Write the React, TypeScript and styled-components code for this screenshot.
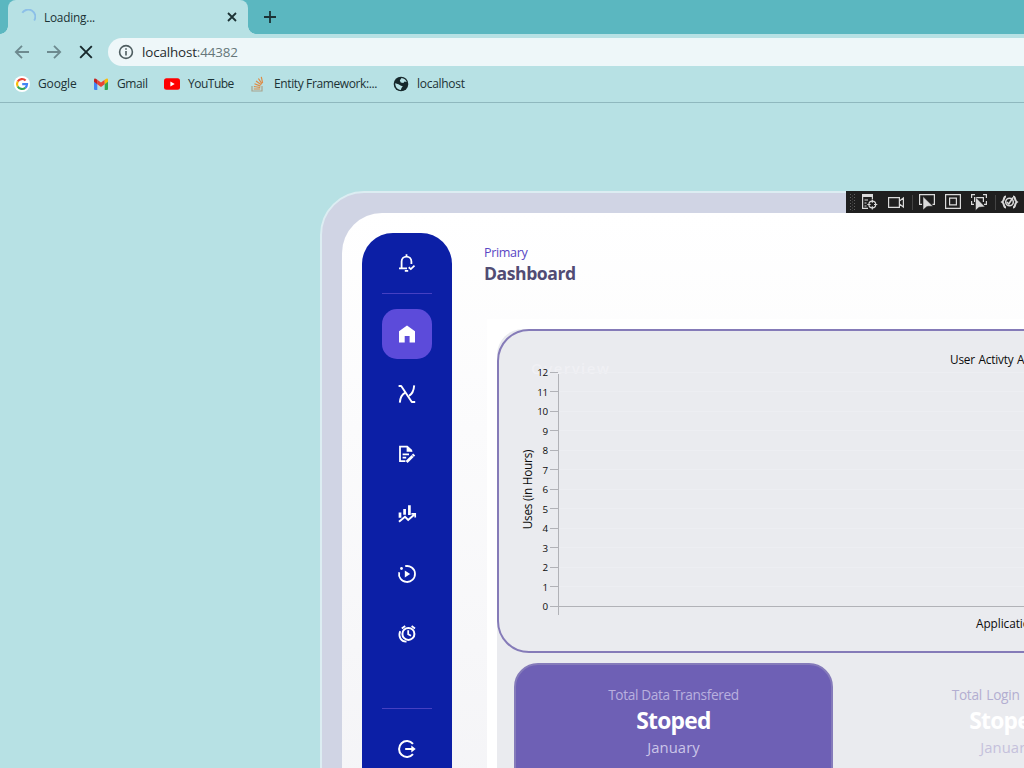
import React from "react";
import styled, { createGlobalStyle } from "styled-components";

const GlobalStyle = createGlobalStyle`
  * { box-sizing: border-box; }
  html, body { margin: 0; padding: 0; overflow: hidden; }
  body { font-family: "Open Sans", "Noto Sans", sans-serif; }
  svg { display: block; flex: none; }
`;

const Screen = styled.div`
  position: relative;
  width: 1024px;
  height: 768px;
  overflow: hidden;
  background: #b7e1e4;
`;

/* Browser chrome */
const TabStrip = styled.div`
  display: flex;
  height: 34px;
  padding-left: 8px;
  background: #5bb7c0;
`;
const StripEdge = styled.div`
  width: 8px;
  height: 34px;
  margin-left: -8px;
  background: radial-gradient(circle at 0 0, transparent 7.5px, #b7e1e4 8px) 0 26px / 8px 8px no-repeat;
`;
const StripEdgeRight = styled.div`
  width: 8px;
  height: 34px;
  background: radial-gradient(circle at 100% 0, transparent 7.5px, #b7e1e4 8px) 0 26px / 8px 8px no-repeat;
`;
const Tab = styled.div`
  display: flex;
  align-items: center;
  width: 240px;
  height: 34px;
  padding: 0 10px 0 12px;
  border-radius: 8px 8px 0 0;
  background: #b7e1e4;
`;
const TabTitle = styled.span`
  flex: 1;
  margin: -1px 0 0 8px;
  font-size: 11.8px;
  letter-spacing: -0.2px;
  color: #1c3235;
`;
const NewTab = styled.div`
  display: flex;
  align-items: center;
  padding-left: 7px;
`;
const NavBar = styled.div`
  display: flex;
  align-items: center;
  height: 36px;
  padding-left: 14px;
`;
const NavButton = styled.div`
  width: 16px;
  margin-right: 16px;
`;
const AddressField = styled.div`
  display: flex;
  align-items: center;
  flex: 1;
  height: 28px;
  margin-left: -2px;
  padding-left: 10px;
  border-radius: 14px 0 0 14px;
  background: #eef7f9;
`;
const Address = styled.span`
  margin-left: 8px;
  font-size: 13.4px;
  letter-spacing: -0.14px;
  color: #1f2b2e;
`;
const Port = styled.span`
  color: #66777a;
`;
const Bookmarks = styled.div`
  display: flex;
  align-items: center;
  height: 33px;
  padding: 0 0 4px 14px;
  border-bottom: 1px solid #8fb8be;
`;
const Bookmark = styled.div<{ $w: number; $track?: number }>`
  display: flex;
  align-items: center;
  gap: 8px;
  width: ${(p) => p.$w}px;
  height: 28px;
  font-size: 12px;
  letter-spacing: ${(p) => p.$track ?? -0.28}px;
  white-space: nowrap;
  color: #1c3235;
`;
const BookmarkName = styled.span`
  margin-top: -1px;
`;

/* Web page */
const Page = styled.div`
  height: 665px;
  padding: 88px 0 0 320px;
`;
const Frame = styled.div`
  display: flex;
  width: 1240px;
  height: 760px;
  border: 2px solid #dcedf2;
  border-radius: 44px;
  padding: 20px;
  background: #d0d4e4;
`;
const Shell = styled.div`
  display: flex;
  align-items: flex-start;
  width: 100%;
  height: 720px;
  padding: 20px;
  border-radius: 40px;
  background: linear-gradient(#ffffff, #f3f3f6 650px);
`;
const SideBar = styled.nav`
  display: flex;
  flex-direction: column;
  align-items: center;
  width: 90px;
  height: 680px;
  border-radius: 31px;
  background: #0c1fa6;
`;
const SideItem = styled.div<{ $active?: boolean }>`
  display: flex;
  align-items: center;
  justify-content: center;
  width: 50px;
  height: 50px;
  margin-bottom: 10px;
  border-radius: 15px;
  background: ${(p) => (p.$active ? "#5c4bda" : "transparent")};
`;
const SideCap = styled.div`
  display: flex;
  align-items: center;
  justify-content: center;
  height: 60px;
`;
const SideRule = styled.div<{ $after: number }>`
  width: 50px;
  height: 1px;
  margin-bottom: ${(p) => p.$after}px;
  background: #4640c2;
`;
const SideMenu = styled.div`
  height: 399px;
`;
const Main = styled.main`
  margin-left: 32px;
  width: 1000px;
`;
const Crumb = styled.div`
  height: 18px;
  margin-top: 10px;
  font-size: 12.6px;
  letter-spacing: -0.36px;
  line-height: 20px;
  color: #5946c4;
`;
const Heading = styled.h1`
  height: 24px;
  margin: 0;
  font-size: 17.6px;
  font-weight: 700;
  letter-spacing: -0.45px;
  line-height: 24px;
  color: #524c74;
`;
const Panel = styled.section`
  width: 990px;
  margin: 34px 0 0 3px;
  padding: 10px;
  background: #ffffff;
`;
const Overview = styled.div`
  width: 990px;
  height: 560px;
  border-radius: 26px;
  background: #eaebef;
`;
const ChartCard = styled.div`
  height: 324px;
  border: 2px solid #857bb8;
  border-radius: 32px;
  background: #eaebef;
`;
const Cards = styled.div`
  display: flex;
  gap: 14px;
  padding: 10px 0 0 17px;
`;
const Card = styled.div<{ $solid?: boolean }>`
  display: flex;
  flex-direction: column;
  align-items: center;
  width: 319px;
  height: 130px;
  padding-top: 19px;
  border: 2px solid ${(p) => (p.$solid ? "#857bba" : "transparent")};
  border-radius: 24px;
  background: ${(p) => (p.$solid ? "#6e60b5" : "transparent")};
`;
const CardLabel = styled.div<{ $dim?: boolean }>`
  height: 22px;
  font-size: 13.7px;
  letter-spacing: ${(p) => (p.$dim ? -0.27 : -0.37)}px;
  word-spacing: ${(p) => (p.$dim ? 1 : 0)}px;
  line-height: 22px;
  white-space: nowrap;
  color: ${(p) => (p.$dim ? "#b3aed1" : "#b9b0df")};
`;
const CardValue = styled.div`
  height: 30px;
  font-size: 22.8px;
  font-weight: 700;
  letter-spacing: -0.75px;
  line-height: 30px;
  color: #ffffff;
`;
const CardMonth = styled.div<{ $dim?: boolean }>`
  height: 24px;
  margin-top: -1px;
  font-size: 14.8px;
  letter-spacing: 0.1px;
  line-height: 24px;
  color: ${(p) => (p.$dim ? "#c5c1dc" : "#cbc5e8")};
`;
const DebugBar = styled.div`
  position: absolute;
  top: 191px;
  left: 846px;
  width: 178px;
  height: 22px;
  background: #1f1f1f;
`;

const Glyph = ({ children, size = 20 }: { children: React.ReactNode; size?: number }) => (
  <svg width={size} height={size} viewBox="0 0 20 20" fill="none" stroke="#fff" strokeWidth="1.8">
    {children}
  </svg>
);

const BellIcon = () => (
  <Glyph>
    <path d="M2 15.3H10M4.6 15V8.5C4.6 5.5 6.8 3.6 9.5 3.6S14.4 5.5 14.4 8.5V11M9.5 1.2V3.5" />
    <path d="M11.7 14.3L13.8 16.1L17.5 12.7M7.8 17.8H11.2" />
  </Glyph>
);
const HomeIcon = () => (
  <Glyph>
    <path d="M2 7.2L10 1.6L18 7.2V18.5H12.6V12H7.7V18.5H2Z" fill="#fff" stroke="none" />
  </Glyph>
);
const CurveIcon = () => (
  <Glyph>
    <path d="M1.6 2H4.2L14.8 18H18.2" strokeWidth="1.9" strokeLinejoin="round" />
    <path d="M2.8 18.6C3.2 13.4 4.6 10.4 8.2 8.6M17.2 1.4C16.8 6.8 15.6 10 12 11.8" strokeWidth="1.9" />
  </Glyph>
);
const EditIcon = () => (
  <Glyph>
    <path d="M8.4 17.1H3V2.6H10.2L14.8 7" />
    <path d="M9.6 1.8V7.8H15.8Z" fill="#fff" stroke="none" />
    <path d="M5.6 10.4H12M5.6 13.6H9.2" />
    <path d="M9.6 17.9L17.2 10.4" strokeWidth="2.8" />
    <path d="M14.2 10.5L16.9 13.2" stroke="#0c1fa6" strokeWidth="0.6" />
  </Glyph>
);
const BarsIcon = () => (
  <Glyph>
    <path d="M3 8.6V13.8M7.6 5V10.8M12.4 1.2V11" strokeWidth="2.7" />
    <path d="M2 17.8L8 12.8L11.2 16L17.4 10.6" strokeWidth="2" />
    <path d="M14.4 9.8H18.2V13.6" strokeWidth="1.7" />
  </Glyph>
);
const PlayIcon = () => (
  <Glyph>
    <path d="M8.2 2.2A8 8 0 1 1 2.2 8.2" />
    <path d="M7.8 6.5L13.2 10L7.8 13.5Z" fill="#fff" stroke="none" />
    <circle cx="4.5" cy="4.5" r="1.4" fill="#fff" stroke="none" />
  </Glyph>
);
const AlarmIcon = () => (
  <Glyph>
    <circle cx="11.4" cy="9.9" r="6" strokeWidth="2" />
    <path d="M11.2 6.3V10.2L14 11.8M4.8 4.6L8.2 2.1M14.6 2.1L18 4.6" />
    <path d="M3.2 7.1C.9 12.6 4 18 9.5 17.7" />
  </Glyph>
);
const ExitIcon = () => (
  <Glyph>
    <path d="M16 4.9A7.9 7.9 0 1 0 16 15.1M8.2 10H16" strokeWidth="2" />
    <path d="M14.3 6.6L18.7 10L14.3 13.4Z" fill="#fff" stroke="none" />
  </Glyph>
);

const Spinner = () => (
  <svg width="16" height="16" viewBox="0 0 16 16" fill="none">
    <path d="M2.3 3.8A7 7 0 0 1 14.2 11.5" stroke="#8cbfe8" strokeWidth="1.9" />
  </svg>
);

const GoogleIcon = () => (
  <svg width="16" height="16" viewBox="0 0 16 16" fill="none" strokeWidth="2.2">
    <circle cx="8" cy="8" r="8" fill="#fff" />
    <path d="M11.6 4.5A5 5 0 0 0 3.7 5.5" stroke="#ea4335" />
    <path d="M3.7 5.5A5 5 0 0 0 3.7 10.5" stroke="#fbbc05" />
    <path d="M3.7 10.5A5 5 0 0 0 11.3 11.8" stroke="#34a853" />
    <path d="M11.3 11.8A5 5 0 0 0 13 8.2H8.2" stroke="#4285f4" />
  </svg>
);
const GmailIcon = () => (
  <svg width="16" height="16" viewBox="0 0 16 16">
    <path d="M1 3.5L4.3 6V14H2Q1 14 1 13Z" fill="#4285f4" />
    <path d="M15 3.5L11.7 6V14H14Q15 14 15 13Z" fill="#34a853" />
    <path d="M4.3 3.8L8 6.6L11.7 3.8V8.2L8 11L4.3 8.2Z" fill="#ea4335" />
    <path d="M1 4Q1 1.2 4.3 3.8V8.2L1 5.7Z" fill="#c5221f" />
    <path d="M15 4Q15 1.2 11.7 3.8V8.2L15 5.7Z" fill="#fbbc04" />
  </svg>
);
const YouTubeIcon = () => (
  <svg width="16" height="16" viewBox="0 0 16 16">
    <rect x="0" y="2.3" width="16" height="11.5" rx="2.5" fill="#f00" />
    <path d="M6.4 5.5L10.7 8L6.4 10.5Z" fill="#fff" />
  </svg>
);
const StackIcon = () => (
  <svg width="16" height="16" viewBox="0 0 16 16" fill="none">
    <path d="M2 10V15H12V10" stroke="#a9a48e" strokeWidth="1.2" />
    <path d="M3.8 13H10.2M3.9 10.5L10.2 11.5M4.5 7.8L10.5 10.1M6 5L11.3 8.7M8.4 2.5L12 7.8M11.3.8L12.6 7" stroke="#df8a43" strokeWidth="1.2" />
  </svg>
);
const GlobeIcon = () => (
  <svg width="16" height="16" viewBox="0 0 16 16">
    <circle cx="8" cy="8" r="7.3" fill="#17282b" />
    <path d="M8.5 2.1C11 2.5 13 4 13.7 6L11.6 5.5L10.3 7L7.8 6.5L6.8 4.5Z" fill="#b7e1e4" />
    <path d="M2.2 7.2L5.5 8.2L8 9.8L9.8 10.2L8.5 12L7.8 13.9C4.5 13.7 2.2 11 2.2 7.2Z" fill="#b7e1e4" />
  </svg>
);

const Browser = () => (
  <header>
    <TabStrip>
      <StripEdge />
      <Tab>
        <Spinner />
        <TabTitle>Loading...</TabTitle>
        <svg width="12" height="12" viewBox="0 0 12 12" stroke="#1c3235" strokeWidth="1.8">
          <path d="M2 2L10 10M10 2L2 10" />
        </svg>
      </Tab>
      <StripEdgeRight />
      <NewTab>
        <svg width="14" height="14" viewBox="0 0 14 14" stroke="#1c3235" strokeWidth="1.8">
          <path d="M7 1V13M1 7H13" />
        </svg>
      </NewTab>
    </TabStrip>
    <NavBar>
      <NavButton>
        <svg width="16" height="16" viewBox="0 0 16 16" fill="none" stroke="#6d8a8f" strokeWidth="1.8">
          <path d="M15 8H2M8 1.8L1.8 8L8 14.2" />
        </svg>
      </NavButton>
      <NavButton>
        <svg width="16" height="16" viewBox="0 0 16 16" fill="none" stroke="#6d8a8f" strokeWidth="1.8">
          <path d="M1 8H14M8 1.8L14.2 8L8 14.2" />
        </svg>
      </NavButton>
      <NavButton>
        <svg width="16" height="16" viewBox="0 0 16 16" stroke="#17282b" strokeWidth="1.9">
          <path d="M2.2 2.2L13.8 13.8M13.8 2.2L2.2 13.8" />
        </svg>
      </NavButton>
      <AddressField>
        <svg width="16" height="16" viewBox="0 0 16 16" fill="none" stroke="#4e5d60" strokeWidth="1.6">
          <circle cx="8" cy="8" r="6.4" />
          <path d="M8 7V11.5M8 4.3V5.8" />
        </svg>
        <Address>
          localhost<Port>:44382</Port>
        </Address>
      </AddressField>
    </NavBar>
    <Bookmarks>
      <Bookmark $w={79} $track={-0.15}><GoogleIcon /><BookmarkName>Google</BookmarkName></Bookmark>
      <Bookmark $w={71} $track={-0.4}><GmailIcon /><BookmarkName>Gmail</BookmarkName></Bookmark>
      <Bookmark $w={86} $track={-0.5}><YouTubeIcon /><BookmarkName>YouTube</BookmarkName></Bookmark>
      <Bookmark $w={143} $track={-0.38}><StackIcon /><BookmarkName>Entity Framework:...</BookmarkName></Bookmark>
      <Bookmark $w={90}><GlobeIcon /><BookmarkName>localhost</BookmarkName></Bookmark>
    </Bookmarks>
  </header>
);

const ticks = Array.from({ length: 13 }, (_, value) => ({ value, y: 275.5 - value * 19.5 }));

const Chart = () => (
  <svg width="986" height="320" viewBox="0 0 986 320" fontFamily='"Open Sans", sans-serif' fill="#0c0c0c">
    <text x="32" y="43" fontSize="15" fontWeight="600" fill="#f0f0f4" textLength="78">Overview</text>
    <text x="451" y="33" fontSize="11.8" letterSpacing="-0.2" wordSpacing="0.8">User Activty Analysis</text>
    {ticks.map(({ value, y }) => (
      <g key={value}>
        <path d={`M60 ${Math.round(y) - 0.5}H986`} stroke="#edeef2" />
        <path d={`M51 ${Math.round(y) - 0.5}H59`} stroke="#b1b2b7" />
        <text x="48.5" y={y + 3.5} fontSize="9.8" letterSpacing="-0.5" textAnchor="end">{value}</text>
      </g>
    ))}
    <path d="M59.5 43V284M51 275.5H986" stroke="#b1b2b7" />
    <text transform="translate(33 158.5) rotate(-90)" fontSize="11.8" letterSpacing="-0.25" textAnchor="middle">Uses (in Hours)</text>
    <text x="477" y="297" fontSize="11.8" letterSpacing="-0.05">Application Name</text>
  </svg>
);

const DebugTools = () => (
  <DebugBar>
    <svg width="178" height="22" viewBox="0 0 178 22" fill="none" stroke="#dadada" strokeWidth="1.2">
      <path d="M4.5 3V20M8.5 3V20" stroke="#606060" strokeWidth="1" strokeDasharray="1 2" />
      <path d="M6.5 4.5V20" stroke="#505050" strokeWidth="1" strokeDasharray="1 2" />
      <path d="M16 4.5H27" strokeWidth="3" />
      <path d="M16.6 6V17.4H22M26.4 6V8M18.5 9H22M18.5 12H20.5M18.5 15H20.5" />
      <circle cx="26.3" cy="13.5" r="3.4" />
      <path d="M26.3 8.5V11.8M26.3 15.2V18.5M21.3 13.5H24.6M28 13.5H31.3" />
      <path d="M42.6 6.6H53.4V16.4H42.6ZM53.4 10L57.4 7V16L53.4 13" />
      <path d="M66.5 4V19M149.5 4V19" stroke="#444" strokeWidth="1" />
      <path d="M76 13.4H73.6V3.6H88.4V13.4H86.5" />
      <path d="M77 5.5V19L80.6 15.8L82.4 15.3H87Z" fill="#dadada" stroke="#1f1f1f" strokeWidth="0.5" />
      <path d="M99.6 3.6H114.4V17.4H99.6ZM103.6 7.1H110.4V13.9H103.6Z" />
      <path d="M125.6 7V3.6H129M137 3.6H140.4V7M125.6 10V13.4H128M140.4 10V13.4H138M128.6 11V6.6H137.4V11" />
      <path d="M129.5 6V19.5L133 16.3L139 15.8Z" fill="#dadada" stroke="#1f1f1f" strokeWidth="0.5" />
      <path d="M160 5.5C157 5.5 159 9 156.2 11C159 13 157 16.5 160 16.5M167 5.5C170 5.5 168 9 170.8 11C168 13 170 16.5 167 16.5" strokeWidth="2" />
      <circle cx="163.5" cy="11" r="3.8" strokeWidth="1.5" />
      <path d="M160.8 11L162.8 13L167 6.5" strokeWidth="1.6" />
    </svg>
  </DebugBar>
);

export default function App() {
  return (
    <>
      <GlobalStyle />
      <Screen>
        <Browser />
        <Page>
          <Frame>
            <Shell>
              <SideBar>
                <SideCap><BellIcon /></SideCap>
                <SideRule $after={15} />
                <SideMenu>
                  <SideItem $active><HomeIcon /></SideItem>
                  <SideItem><CurveIcon /></SideItem>
                  <SideItem><EditIcon /></SideItem>
                  <SideItem><BarsIcon /></SideItem>
                  <SideItem><PlayIcon /></SideItem>
                  <SideItem><AlarmIcon /></SideItem>
                </SideMenu>
                <SideRule $after={15} />
                <SideItem><ExitIcon /></SideItem>
              </SideBar>
              <Main>
                <Crumb>Primary</Crumb>
                <Heading>Dashboard</Heading>
                <Panel>
                  <Overview>
                    <ChartCard><Chart /></ChartCard>
                    <Cards>
                      <Card $solid>
                        <CardLabel>Total Data Transfered</CardLabel>
                        <CardValue>Stoped</CardValue>
                        <CardMonth>January</CardMonth>
                      </Card>
                      <Card>
                        <CardLabel $dim>Total Login Hours</CardLabel>
                        <CardValue>Stoped</CardValue>
                        <CardMonth $dim>January</CardMonth>
                      </Card>
                    </Cards>
                  </Overview>
                </Panel>
              </Main>
            </Shell>
          </Frame>
        </Page>
        <DebugTools />
      </Screen>
    </>
  );
}
